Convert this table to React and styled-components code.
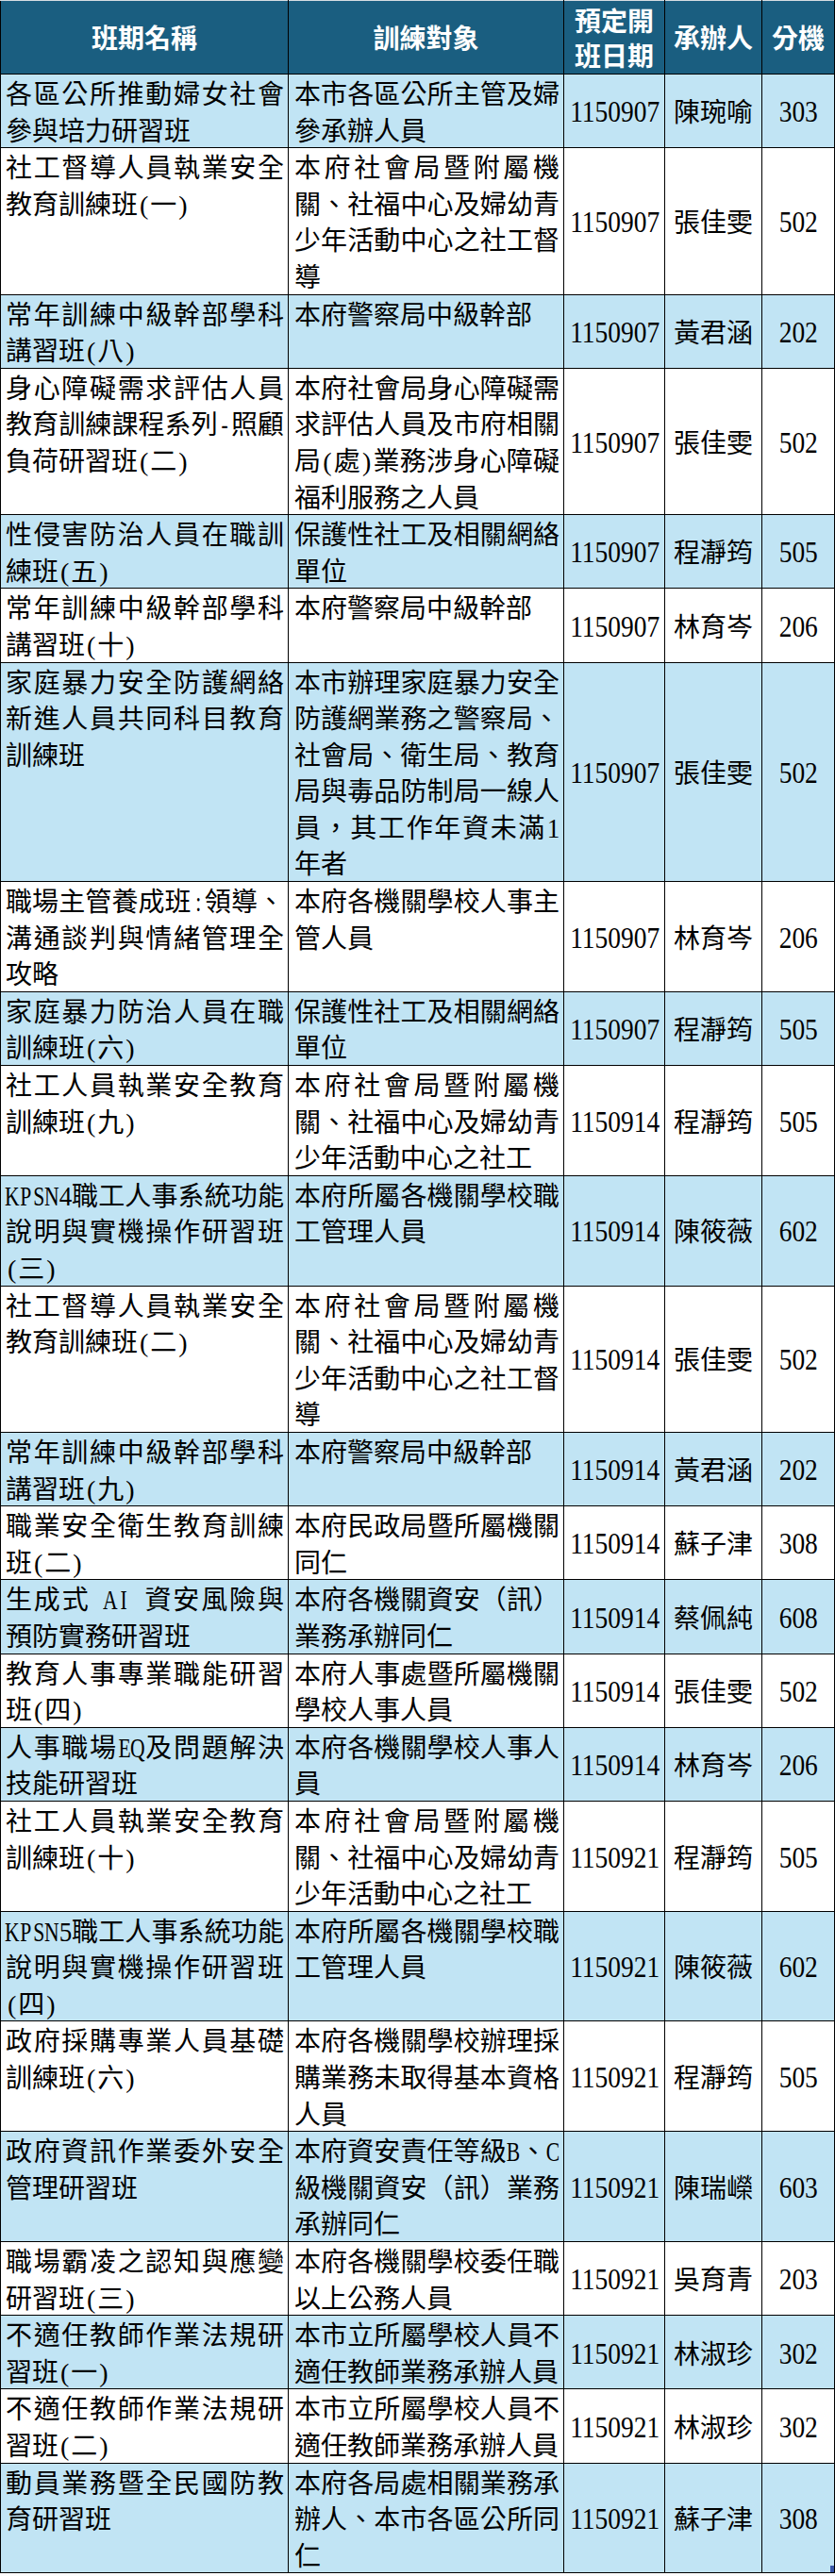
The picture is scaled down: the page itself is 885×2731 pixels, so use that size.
import React from "react";
import styled, { createGlobalStyle } from "styled-components";

const GlobalStyle = createGlobalStyle`
  html, body {
    margin: 0;
    padding: 0;
    background: #ffffff;
  }
  body {
    font-family: "Noto Sans CJK TC", "Liberation Serif", sans-serif;
    color: #000;
  }
`;

const courses = [
  { name: "各區公所推動婦女社會參與培力研習班", target: "本市各區公所主管及婦參承辦人員", date: "1150907", owner: "陳琬喻", ext: "303" },
  { name: "社工督導人員執業安全教育訓練班(一)", target: "本府社會局暨附屬機關、社福中心及婦幼青少年活動中心之社工督導", date: "1150907", owner: "張佳雯", ext: "502" },
  { name: "常年訓練中級幹部學科講習班(八)", target: "本府警察局中級幹部", date: "1150907", owner: "黃君涵", ext: "202" },
  { name: "身心障礙需求評估人員教育訓練課程系列-照顧負荷研習班(二)", target: "本府社會局身心障礙需求評估人員及市府相關局(處)業務涉身心障礙福利服務之人員", date: "1150907", owner: "張佳雯", ext: "502" },
  { name: "性侵害防治人員在職訓練班(五)", target: "保護性社工及相關網絡單位", date: "1150907", owner: "程瀞筠", ext: "505" },
  { name: "常年訓練中級幹部學科講習班(十)", target: "本府警察局中級幹部", date: "1150907", owner: "林育岑", ext: "206" },
  { name: "家庭暴力安全防護網絡新進人員共同科目教育訓練班", target: "本市辦理家庭暴力安全防護網業務之警察局、社會局、衛生局、教育局與毒品防制局一線人員，其工作年資未滿1年者", date: "1150907", owner: "張佳雯", ext: "502" },
  { name: "職場主管養成班:領導、溝通談判與情緒管理全攻略", target: "本府各機關學校人事主管人員", date: "1150907", owner: "林育岑", ext: "206" },
  { name: "家庭暴力防治人員在職訓練班(六)", target: "保護性社工及相關網絡單位", date: "1150907", owner: "程瀞筠", ext: "505" },
  { name: "社工人員執業安全教育訓練班(九)", target: "本府社會局暨附屬機關、社福中心及婦幼青少年活動中心之社工", date: "1150914", owner: "程瀞筠", ext: "505" },
  { name: "KPSN4職工人事系統功能說明與實機操作研習班(三)", target: "本府所屬各機關學校職工管理人員", date: "1150914", owner: "陳筱薇", ext: "602" },
  { name: "社工督導人員執業安全教育訓練班(二)", target: "本府社會局暨附屬機關、社福中心及婦幼青少年活動中心之社工督導", date: "1150914", owner: "張佳雯", ext: "502" },
  { name: "常年訓練中級幹部學科講習班(九)", target: "本府警察局中級幹部", date: "1150914", owner: "黃君涵", ext: "202" },
  { name: "職業安全衛生教育訓練班(二)", target: "本府民政局暨所屬機關同仁", date: "1150914", owner: "蘇子津", ext: "308" },
  { name: "生成式 AI 資安風險與預防實務研習班", target: "本府各機關資安（訊）業務承辦同仁", date: "1150914", owner: "蔡佩純", ext: "608" },
  { name: "教育人事專業職能研習班(四)", target: "本府人事處暨所屬機關學校人事人員", date: "1150914", owner: "張佳雯", ext: "502" },
  { name: "人事職場EQ及問題解決技能研習班", target: "本府各機關學校人事人員", date: "1150914", owner: "林育岑", ext: "206" },
  { name: "社工人員執業安全教育訓練班(十)", target: "本府社會局暨附屬機關、社福中心及婦幼青少年活動中心之社工", date: "1150921", owner: "程瀞筠", ext: "505" },
  { name: "KPSN5職工人事系統功能說明與實機操作研習班(四)", target: "本府所屬各機關學校職工管理人員", date: "1150921", owner: "陳筱薇", ext: "602" },
  { name: "政府採購專業人員基礎訓練班(六)", target: "本府各機關學校辦理採購業務未取得基本資格人員", date: "1150921", owner: "程瀞筠", ext: "505" },
  { name: "政府資訊作業委外安全管理研習班", target: "本府資安責任等級B、C級機關資安（訊）業務承辦同仁", date: "1150921", owner: "陳瑞嶸", ext: "603" },
  { name: "職場霸凌之認知與應變研習班(三)", target: "本府各機關學校委任職以上公務人員", date: "1150921", owner: "吳育青", ext: "203" },
  { name: "不適任教師作業法規研習班(一)", target: "本市立所屬學校人員不適任教師業務承辦人員", date: "1150921", owner: "林淑珍", ext: "302" },
  { name: "不適任教師作業法規研習班(二)", target: "本市立所屬學校人員不適任教師業務承辦人員", date: "1150921", owner: "林淑珍", ext: "302" },
  { name: "動員業務暨全民國防教育研習班", target: "本府各局處相關業務承辦人、本市各區公所同仁", date: "1150921", owner: "蘇子津", ext: "308" },
];

// half-width latin glyphs, like the Ming font of the sheet.
// parens stay plain inline text so line breaking keeps them with their word
function Mixed({ text }) {
  const parts = [];
  let run = "";
  const flush = () => {
    if (run) {
      parts.push(run);
      run = "";
    }
  };
  [...text].forEach((ch, i) => {
    if (ch === "(" || ch === ")") {
      flush();
      parts.push(<Paren key={i}>{ch}</Paren>);
    } else if (ch.charCodeAt(0) < 128) {
      flush();
      parts.push(
        <HalfChar key={i}>
          <Glyph $digit={/[0-9]/.test(ch)}>{ch}</Glyph>
        </HalfChar>
      );
    } else {
      run += ch;
    }
  });
  flush();
  return <>{parts}</>;
}

export default function App() {
  return (
    <Sheet>
      <GlobalStyle />
      <Table>
        <colgroup>
          <col style={{ width: 305 }} />
          <col style={{ width: 292 }} />
          <col style={{ width: 107 }} />
          <col style={{ width: 103 }} />
          <col style={{ width: 77 }} />
        </colgroup>
        <thead>
          <HeadRow>
            <HeadCell>班期名稱</HeadCell>
            <HeadCell>訓練對象</HeadCell>
            <HeadCell>
              預定開
              <br />
              班日期
            </HeadCell>
            <HeadCell>承辦人</HeadCell>
            <HeadCell>分機</HeadCell>
          </HeadRow>
        </thead>
        <tbody>
          {courses.map((c, i) => (
            <Row key={i} $shade={i % 2 === 0}>
              <TextCell $left={5}>
                <Mixed text={c.name} />
              </TextCell>
              <TextCell $left={6}>
                <Mixed text={c.target} />
              </TextCell>
              <MidCell>
                <Num>{c.date}</Num>
              </MidCell>
              <MidCell>{c.owner}</MidCell>
              <MidCell>
                <Num>{c.ext}</Num>
              </MidCell>
            </Row>
          ))}
        </tbody>
      </Table>
      <FillHandle />
    </Sheet>
  );
}

const Sheet = styled.div`
  position: relative;
  width: 885px;
`;

const Table = styled.table`
  width: 884px;
  border-collapse: collapse;
  table-layout: fixed;
`;

const HeadRow = styled.tr`
  height: 78px;
  background: #1a5e80;
`;

const HeadCell = styled.th`
  border: 1px solid #000;
  border-top-color: #d6dde2;
  padding: 0;
  color: #ffffff;
  font-size: 28px;
  font-weight: 700;
  line-height: 37px;
  text-align: center;
  vertical-align: middle;
`;

const Row = styled.tr`
  background: ${(p) => (p.$shade ? "#c1e4f4" : "#ffffff")};
`;

const TextCell = styled.td`
  border: 1px solid #000;
  padding: 0 4px 0 ${(p) => p.$left}px;
  font-size: 28px;
  line-height: 38.6px;
  text-align: justify;
  vertical-align: top;
`;

const MidCell = styled.td`
  border: 1px solid #000;
  padding: 0;
  font-size: 28px;
  line-height: 38.6px;
  text-align: center;
  vertical-align: middle;
  white-space: nowrap;
`;

const Num = styled.span`
  display: inline-block;
  font-family: "Liberation Serif", serif;
  font-size: 31px;
  line-height: 1;
  transform: scaleX(0.885);
`;

const Paren = styled.span`
  font-family: "Liberation Serif", serif;
  line-height: 24px;
  padding: 0 2px;
`;

const HalfChar = styled.span`
  display: inline-flex;
  justify-content: center;
  width: 14px;
  font-family: "Liberation Serif", serif;
  font-size: 30px;
  line-height: 1;
  white-space: pre;
`;

const Glyph = styled.span`
  display: inline-block;
  transform: scaleX(${(p) => (p.$digit ? 0.9 : 0.72)});
`;

const FillHandle = styled.div`
  position: absolute;
  right: 1px;
  bottom: 1px;
  width: 4px;
  height: 7px;
  background: #3a58a8;
`;
